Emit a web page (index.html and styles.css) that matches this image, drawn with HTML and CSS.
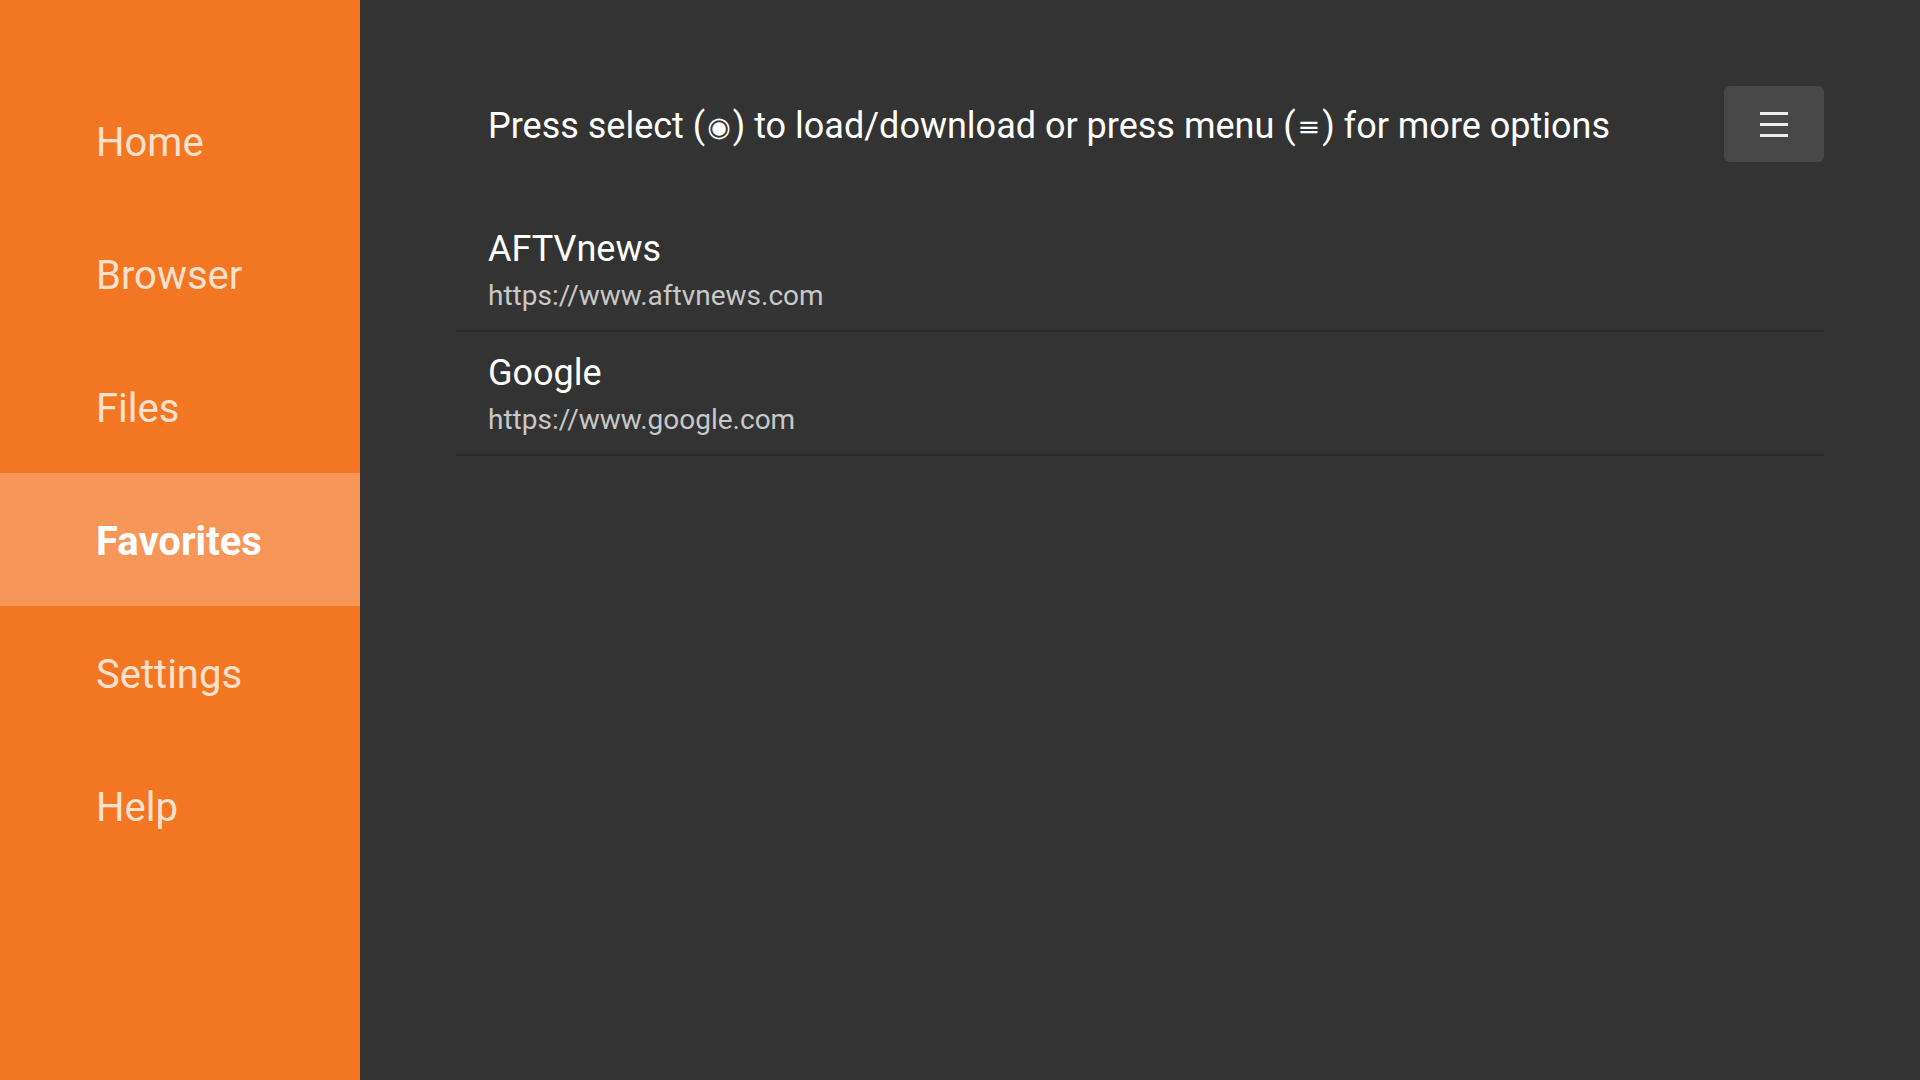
FILE: index.html
```html
<!DOCTYPE html>
<html lang="en">
<head>
<meta charset="utf-8">
<title>Favorites</title>
<link rel="stylesheet" href="styles.css">
</head>
<body>
<div class="app">
  <nav class="sidebar">
    <div class="nav-item">Home</div>
    <div class="nav-item">Browser</div>
    <div class="nav-item">Files</div>
    <div class="nav-item active">Favorites</div>
    <div class="nav-item">Settings</div>
    <div class="nav-item">Help</div>
  </nav>
  <main class="main">
    <header class="header">
      <div class="hint">Press select (<span class="sym">◉</span>) to load/download or press menu (<span class="sym">≡</span>) for more options</div>
      <button class="menu-btn" aria-label="Menu">
        <svg width="28" height="26" viewBox="0 0 28 26">
          <rect x="0" y="1" width="28" height="3" fill="#ececec"/>
          <rect x="0" y="12" width="28" height="3" fill="#ececec"/>
          <rect x="0" y="23" width="28" height="3" fill="#ececec"/>
        </svg>
      </button>
    </header>
    <ul class="fav-list">
      <li class="fav-row">
        <div class="fav-title">AFTVnews</div>
        <div class="fav-url">https://www.aftvnews.com</div>
      </li>
      <li class="fav-row">
        <div class="fav-title">Google</div>
        <div class="fav-url">https://www.google.com</div>
      </li>
    </ul>
  </main>
</div>
</body>
</html>
```
FILE: styles.css
```css
* { box-sizing: border-box; }
html, body {
  margin: 0;
  padding: 0;
  width: 1920px;
  height: 1080px;
  overflow: hidden;
  font-family: Roboto, "Noto Sans", "DejaVu Sans", sans-serif;
}
.app {
  display: flex;
  width: 1920px;
  height: 1080px;
}
.sidebar {
  width: 360px;
  flex: 0 0 360px;
  background: #f37723;
  padding-top: 74px;
  display: flex;
  flex-direction: column;
}
.nav-item {
  height: 133px;
  display: flex;
  align-items: center;
  padding-left: 96px;
  padding-top: 4px;
  font-size: 40px;
  color: #ffe1cd;
}
.nav-item.active {
  background: #f69759;
  color: #ffffff;
  font-weight: 700;
}
.main {
  flex: 1;
  background: #333333;
  padding: 86px 96px 0 96px;
  display: flex;
  flex-direction: column;
}
.header {
  display: flex;
  align-items: center;
  justify-content: space-between;
  height: 76px;
}
.hint {
  padding-left: 32px;
  padding-top: 5px;
  font-size: 36px;
  line-height: 42px;
  color: #ffffff;
}
.sym {
  font-family: "DejaVu Sans", sans-serif;
  font-size: 27px;
  margin: 0 2px;
  vertical-align: 2px;
}
.menu-btn {
  width: 100px;
  height: 76px;
  border: none;
  border-radius: 6px;
  background: #484848;
  display: flex;
  align-items: center;
  justify-content: center;
  padding: 0;
}
.fav-list {
  list-style: none;
  margin: 46px 0 0 0;
  padding: 0;
}
.fav-row {
  padding: 21px 32px 18px 32px;
  border-bottom: 2px solid #2a2a2a;
}
.fav-title {
  font-size: 36px;
  line-height: 41px;
  color: #ffffff;
}
.fav-url {
  margin-top: 9px;
  font-size: 28px;
  line-height: 33px;
  color: #c8c8c8;
}
```
